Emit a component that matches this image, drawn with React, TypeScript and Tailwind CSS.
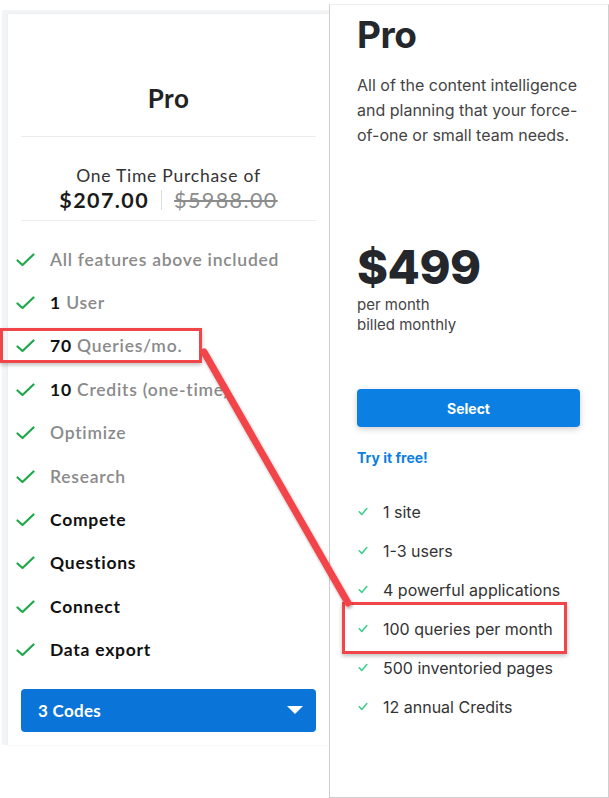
import React from 'react';

type Feature = { strong?: string; rest?: string; bold?: boolean };

const dealFeatures: Feature[] = [
    { rest: 'All features above included' },
    { strong: '1', rest: 'User' },
    { strong: '70', rest: 'Queries/mo.' },
    { strong: '10', rest: 'Credits (one-time)' },
    { rest: 'Optimize' },
    { rest: 'Research' },
    { strong: 'Compete', bold: true },
    { strong: 'Questions', bold: true },
    { strong: 'Connect', bold: true },
    { strong: 'Data export', bold: true },
];

const planFeatures = [
    '1 site',
    '1-3 users',
    '4 powerful applications',
    '100 queries per month',
    '500 inventoried pages',
    '12 annual Credits',
];

const BigCheck = () => (
    <svg width="19" height="14" viewBox="0 0 19 14" className="shrink-0">
        <polyline points="1.5,7.5 6.5,12 17.5,1.5" fill="none" stroke="#1fa84a" strokeWidth="2.2" strokeLinecap="round" strokeLinejoin="round" />
    </svg>
);

const SmallCheck = () => (
    <svg width="10" height="9" viewBox="0 0 10 9" className="shrink-0">
        <polyline points="1.2,4.8 3.8,7.4 8.8,1.5" fill="none" stroke="#3fcf8e" strokeWidth="1.6" strokeLinecap="round" strokeLinejoin="round" />
    </svg>
);

const App: React.FC = () => {
    return (
        <div className="relative flex h-[798px] w-[609px] overflow-hidden bg-white">
            {/* Deal card (left) */}
            <div className="w-[329px] shrink-0 pl-[2px] pt-[10px]">
                <div className="h-[735px] bg-[#f3f4f6] pl-[6px] pt-[4px]">
                    <div className="flex h-full flex-col bg-white px-[13px] font-['Lato',sans-serif] shadow-[0_0_3px_rgba(0,0,0,0.06)]">
                        <div className="flex h-[122px] items-end justify-center pb-[22px]">
                            <h2 className="text-[26px] leading-[32px] font-bold tracking-[0.5px] text-[#222]">Pro</h2>
                        </div>
                        <div className="border-t border-[#ececec]" />
                        <div className="flex flex-col items-center pt-[28px] pb-[7px]">
                            <p className="text-[17.5px] leading-[22px] tracking-[0.75px] text-[#333]">One Time Purchase of</p>
                            <div className="flex items-center text-[21.5px] leading-[26px] tracking-[1.4px]">
                                <span className="font-bold text-[#1b1b1b]">$207.00</span>
                                <span className="mx-[12px] h-[20px] border-l border-[#dcdcdc]" />
                                <span className="text-[#8c8c8c] line-through">$5988.00</span>
                            </div>
                        </div>
                        <div className="border-t border-[#ececec]" />
                        <ul className="pt-[17px]">
                            {dealFeatures.map((f, idx) => (
                                <li key={idx} className="flex h-[43.4px] items-center gap-[13px] text-[17.5px] tracking-[0.75px]">
                                    <span className="-ml-[5px] flex w-[21px] justify-start">
                                        <BigCheck />
                                    </span>
                                    <span className="whitespace-nowrap">
                                        {f.strong && <span className="font-bold text-[#111]">{f.strong}</span>}
                                        {f.strong && f.rest && ' '}
                                        {f.rest && <span className="font-semibold text-[#8a8a8a]">{f.rest}</span>}
                                    </span>
                                </li>
                            ))}
                        </ul>
                        <button className="mt-[17px] flex h-[43px] w-full items-center justify-between rounded-[4px] bg-[#0b74d9] pl-[17px] pr-[13px] text-[17px] font-bold tracking-[0.3px] text-white">
                            <span>3 Codes</span>
                            <svg width="16" height="8" viewBox="0 0 16 8">
                                <polygon points="0,0 16,0 8,8" fill="white" />
                            </svg>
                        </button>
                    </div>
                </div>
            </div>

            {/* Plan card (right) */}
            <div className="mt-[4px] flex h-[794px] w-[280px] shrink-0 flex-col border border-[#cfcfcf] border-t-[#ececec] bg-white px-[27px] font-['Inter',sans-serif]">
                <h2 className="mt-[12px] text-[37px] leading-[36px] font-bold tracking-[-0.5px] text-[#24272b]">Pro</h2>
                <p className="mt-[20px] text-[16px] leading-[25px] whitespace-nowrap text-[#444]">
                    All of the content intelligence
                    <br />
                    and planning that your force-
                    <br />
                    of-one or small team needs.
                </p>
                <div className="mt-[91px] text-[47px] leading-[56px] font-extrabold tracking-[-0.5px] text-[#24272b]">$499</div>
                <p className="text-[15px] leading-[20px] text-[#444]">
                    per month
                    <br />
                    billed monthly
                </p>
                <button className="mt-[54px] h-[38px] w-[223px] rounded-[4px] bg-[#0c80e2] text-[14px] font-bold text-white shadow-[0_2px_6px_rgba(0,0,0,0.2)]">
                    Select
                </button>
                <a className="mt-[21px] text-[14px] leading-[20px] font-bold text-[#0b7fe0]">Try it free!</a>
                <ul className="mt-[24px]">
                    {planFeatures.map((f) => (
                        <li key={f} className="flex h-[39px] items-center gap-[15px] pl-[1px] text-[16px] text-[#333]">
                            <SmallCheck />
                            <span>{f}</span>
                        </li>
                    ))}
                </ul>
            </div>

            {/* Annotation overlay */}
            <div className="pointer-events-none absolute top-[328px] left-0 h-[35px] w-[202px] border-[3px] border-[#f24549] shadow-[0_2px_4px_rgba(0,0,0,0.25)]" />
            <div className="pointer-events-none absolute top-[602px] left-[342px] h-[52px] w-[225px] border-[3px] border-[#f24549] shadow-[0_2px_4px_rgba(0,0,0,0.25)]" />
            <svg className="pointer-events-none absolute top-0 left-0" width="609" height="798">
                <defs>
                    <filter id="arrowShadow" x="-20%" y="-20%" width="140%" height="140%">
                        <feDropShadow dx="1" dy="2" stdDeviation="1.5" floodColor="#000" floodOpacity="0.3" />
                    </filter>
                </defs>
                <line x1="204" y1="352" x2="348" y2="603" stroke="#f24549" strokeWidth="7" strokeLinecap="round" filter="url(#arrowShadow)" />
            </svg>
        </div>
    );
};

export default App;
